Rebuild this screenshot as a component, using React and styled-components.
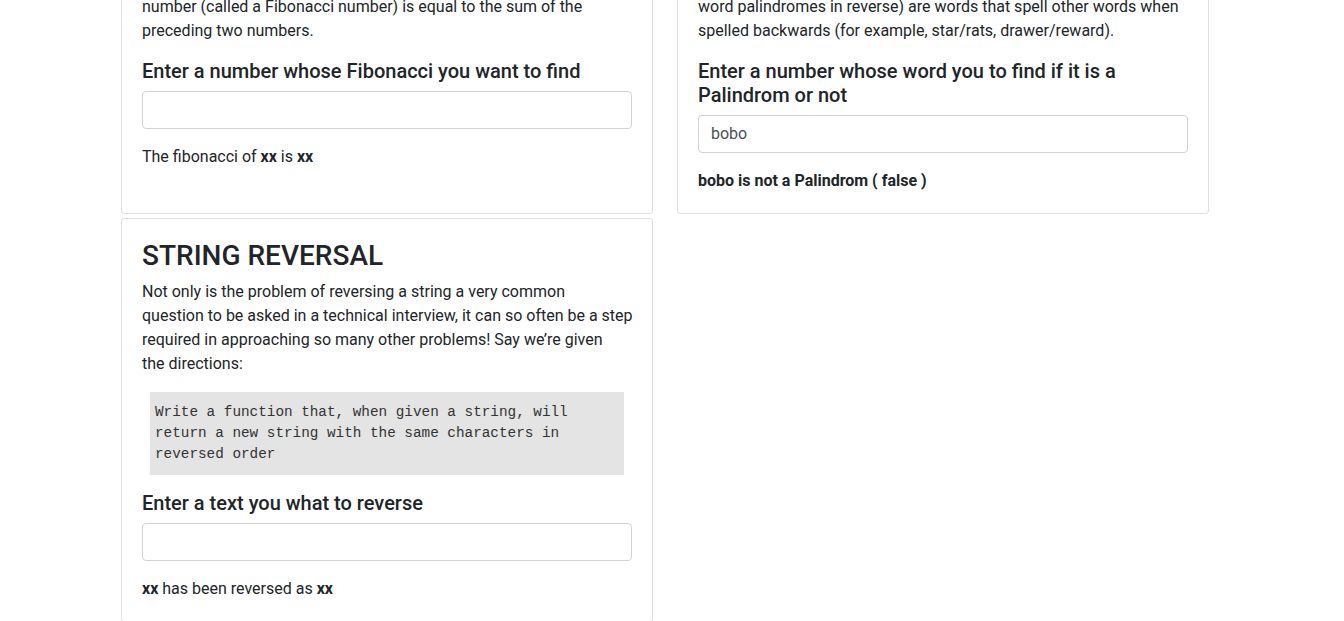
import { useState } from "react";
import styled, { createGlobalStyle } from "styled-components";

const GlobalStyle = createGlobalStyle`
  body {
    margin: 0;
    background: #fff;
    color: #212529;
    font-family: Roboto, "Liberation Sans", sans-serif;
    font-size: 16px;
    line-height: 1.5;
  }
  * {
    box-sizing: border-box;
  }
`;

function fibonacci(n) {
  let a = 0;
  let b = 1;
  for (let i = 0; i < n; i++) {
    const next = a + b;
    a = b;
    b = next;
  }
  return a;
}

export default function App() {
  const [fibValue, updateFibValue] = useState("");
  const [word, updateWord] = useState("bobo");
  const [text, updateText] = useState("");

  function fibResult() {
    if (fibValue === "" || isNaN(parseInt(fibValue))) {
      return (
        <>
          The fibonacci of <strong>xx</strong> is <strong>xx</strong>
        </>
      );
    }
    return (
      <>
        The fibonacci of <strong>{fibValue}</strong> is{" "}
        <strong>{fibonacci(parseInt(fibValue))}</strong>
      </>
    );
  }

  function palindromeResult() {
    const isPalindrome = word === word.split("").reverse().join("");
    return `${word} is ${isPalindrome ? "" : "not "}a Palindrom ( ${isPalindrome} )`;
  }

  function reverseResult() {
    const original = text === "" ? "xx" : text;
    const reversed = text === "" ? "xx" : text.split("").reverse().join("");
    return (
      <>
        <strong>{original}</strong> has been reversed as <strong>{reversed}</strong>
      </>
    );
  }

  return (
    <Page>
      <GlobalStyle />
      <Grid>
        <Card>
          <Title>FIBONACCI</Title>
          <Text>
            In mathematics, the Fibonacci numbers form a sequence, called the
            Fibonacci sequence, such that each
            <br />
            number (called a Fibonacci number) is equal to the sum of the
            preceding two numbers.
          </Text>
          <Prompt>Enter a number whose Fibonacci you want to find</Prompt>
          <Field
            type="text"
            value={fibValue}
            onChange={(e) => updateFibValue(e.target.value)}
          />
          <Result>{fibResult()}</Result>
        </Card>

        <Card>
          <Title>PALINDROME</Title>
          <Text>
            A palindrome is a word which reads the same backward as forward,
            such as madam. Semordnilaps (also known as
            <br />
            word palindromes in reverse) are words that spell other words when
            spelled backwards (for example, star/rats, drawer/reward).
          </Text>
          <Prompt>Enter a number whose word you to find if it is a Palindrom or not</Prompt>
          <Field
            type="text"
            value={word}
            onChange={(e) => updateWord(e.target.value)}
          />
          <Result $bold>{palindromeResult()}</Result>
        </Card>

        <Card>
          <Title>STRING REVERSAL</Title>
          <Text $nowrap>
            Not only is the problem of reversing a string a very common
            <br />
            question to be asked in a technical interview, it can so often be a step
            <br />
            required in approaching so many other problems! Say we’re given
            <br />
            the directions:
          </Text>
          <CodeBlock>
            {"Write a function that, when given a string, will\nreturn a new string with the same characters in\nreversed order"}
          </CodeBlock>
          <Prompt>Enter a text you what to reverse</Prompt>
          <Field
            type="text"
            value={text}
            onChange={(e) => updateText(e.target.value)}
          />
          <Result>{reverseResult()}</Result>
        </Card>
      </Grid>
    </Page>
  );
}

const Page = styled.div`
  margin-top: -116px;
  padding-left: 121px;
`;

const Grid = styled.div`
  display: grid;
  grid-template-columns: 532px 532px;
  column-gap: 24px;
  row-gap: 4px;
  align-items: stretch;
`;

const Card = styled.div`
  border: 1px solid rgba(0, 0, 0, 0.125);
  border-radius: 4px;
  padding: 20px;
  background: #fff;
`;

const Title = styled.h3`
  margin: 0 0 8px;
  font-size: 28px;
  font-weight: 500;
  line-height: 1.2;
`;

const Text = styled.p`
  margin: 0 0 16px;
  line-height: 24px;
  white-space: ${(props) => (props.$nowrap ? "nowrap" : "normal")};
`;

const Prompt = styled.h5`
  margin: 0 0 8px;
  font-size: 20px;
  font-weight: 500;
  line-height: 1.2;
`;

const Field = styled.input`
  display: block;
  width: 100%;
  height: 38px;
  margin-bottom: 16px;
  padding: 6px 12px;
  font-family: inherit;
  font-size: 16px;
  line-height: 1.5;
  color: #495057;
  background: #fff;
  border: 1px solid #ced4da;
  border-radius: 4px;
  outline: none;
`;

const Result = styled.p`
  margin: 0;
  line-height: 24px;
  font-weight: ${(props) => (props.$bold ? 700 : 400)};
`;

const CodeBlock = styled.pre`
  margin: 0 8px 16px;
  padding: 10px 5px;
  background: #e4e4e4;
  color: #333;
  font-family: "Liberation Mono", "Courier New", monospace;
  font-size: 14.33px;
  line-height: 21px;
  white-space: pre-wrap;
`;
